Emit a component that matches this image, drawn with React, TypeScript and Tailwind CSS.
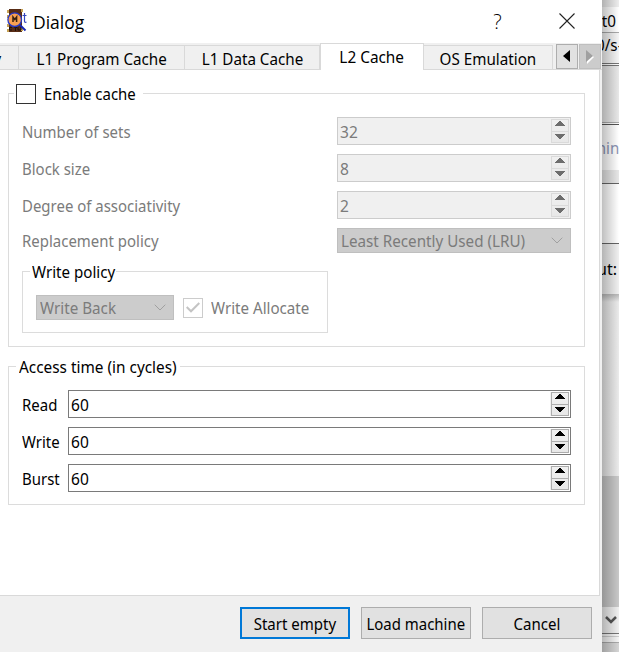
import React from "react";

function Caret({ up, color }: { up?: boolean; color: string }) {
  return (
    <svg width="10" height="5" viewBox="0 0 10 5" shapeRendering="crispEdges" className="block">
      <path d={up ? "M0 5V4H1V3H2V2H3V1H4V0H6V1H7V2H8V3H9V4H10V5Z" : "M0 0H10V1H9V2H8V3H7V4H6V5H4V4H3V3H2V2H1V1H0Z"} fill={color} />
    </svg>
  );
}

function Spin({ value, disabled }: { value: string; disabled?: boolean }) {
  const color = disabled ? "#6d6d6d" : "#000";
  const line = disabled ? "border-[#dadada]" : "border-[#adadad]";
  return (
    <div className={"flex h-7 flex-1 items-center justify-between border pl-[2px] pr-px " + (disabled ? "border-[#cccccc] bg-[#f0f0f0] text-[#7b7b7b]" : "border-[#7a7a7a] bg-white")}>
      <span className="origin-left scale-x-[.97] pt-[2px]">{value}</span>
      <div className="bg-[#f0f0f0] pl-px">
        <div className={"flex h-6 w-[18px] flex-col border bg-gradient-to-b from-[#f0f0f0] to-[#e8e8e8] " + line}>
          <div className={"flex h-[12px] items-start justify-center border-b pt-px " + line}><Caret up color={color} /></div>
          <div className="flex flex-1 items-start justify-center pt-[2px]"><Caret color={color} /></div>
        </div>
      </div>
    </div>
  );
}

function Combo({ value, className }: { value: string; className: string }) {
  return (
    <div className={"flex h-[25px] items-center justify-between border border-[#bfbfbf] bg-[#cccccc] pl-[3px] pr-[7px] text-[#7b7b7b] " + className}>
      <span className="origin-left scale-x-[.95] pt-px">{value}</span>
      <svg width="12" height="7" viewBox="0 0 12 7" fill="none" stroke="#a0a0a0"><path d="M.7.7L6 6L11.3.7" /></svg>
    </div>
  );
}

function MachineIcon() {
  return (
    <svg width="22" height="26" viewBox="0 0 22 26" className="mb-[3px] shrink-0">
      <path d="M3 2H16V25H3Z" fill="#582c15" />
      <path d="M1 3H3V6H1ZM1 8H3V11H1ZM1 17H3V20H1ZM1 22H3V25H1ZM15 2H17V5H15ZM15 21H17V24H15Z" fill="#c6a255" />
      <path d="M3.5 20.5H6M3.5 20V23H6M8 20.5H11M9.5 20.5V24M12 20V23H15V20" stroke="#1d120e" fill="none" />
      <circle cx="8.7" cy="12.7" r="6.8" fill="#f8a052" stroke="#2438c8" strokeWidth="1.3" />
      <path d="M7 15V10L8.8 12.5L10.6 10V15" stroke="#36200f" strokeWidth="1.5" fill="none" />
      <path d="M14 18L19.5 23.5" stroke="#1726b4" strokeWidth="2" />
      <path d="M18.5 6V14Q18.5 16 20.5 15M16.5 8.5H20.5" stroke="#3446bd" strokeWidth="1.2" fill="none" />
    </svg>
  );
}

const label = "origin-left scale-x-[.935] pt-[2px]";
const tab = "mt-[2px] flex h-[25px] shrink-0 items-center justify-center border-y border-r border-[#d9d9d9] bg-[#f0f0f0] pt-[3px]";
const button = "flex h-8 w-[110px] items-center justify-center bg-[#e1e1e1] pt-[2px]";

export default function App() {
  return (
    <div className="flex h-[652px] w-[619px] overflow-hidden bg-white font-['Noto_Sans','Open_Sans',sans-serif] text-[16px] leading-[20px] whitespace-nowrap text-black">
      <div className="flex w-[602px] shrink-0 flex-col bg-[#f0f0f0]">
        <header className="flex h-[43px] shrink-0 items-center bg-white pl-[6px]">
          <MachineIcon />
          <h1 className="ml-[5px] origin-left scale-x-[.92] font-['Open_Sans','Noto_Sans',sans-serif] text-[19px] leading-[26px]">Dialog</h1>
          <span className="mb-[2px] ml-auto scale-x-[.95] font-['Open_Sans','Noto_Sans',sans-serif] text-[21px] font-light">?</span>
          <svg className="mr-[27px] mb-[2px] ml-[57px]" width="16" height="16" viewBox="0 0 16 16" stroke="#222" strokeWidth="1.1"><path d="M.5.5L15.5 15.5M15.5.5L.5 15.5" /></svg>
        </header>

        <nav className="flex h-[27px] shrink-0">
          <div className={tab + " w-[19px] !justify-start overflow-hidden"}><span className="-ml-[7px]">y</span></div>
          <div className={tab + " w-[166px]"}><span className="scale-x-[.95]">L1 Program Cache</span></div>
          <div className={tab + " w-[135px]"}><span className="scale-x-[.95]">L1 Data Cache</span></div>
          <div className="flex h-[27px] w-[104px] items-center justify-center border-x border-t border-[#d9d9d9] bg-white"><span className="scale-x-[.96]">L2 Cache</span></div>
          <div className={tab + " w-[129px]"}><span className="scale-x-[.95]">OS Emulation</span></div>
          <div className="flex flex-1 items-start border-b border-[#d9d9d9] pt-px pl-[3px]">
            <div className="flex h-[25px] w-[22px] items-center justify-center border border-[#adadad] bg-[#e1e1e1] pr-px pb-[2px]">
              <svg width="7" height="12" viewBox="0 0 7 12"><path d="M7 0V12L0 6Z" /></svg>
            </div>
            <div className="ml-px flex h-[25px] w-[22px] items-center justify-center border border-[#bfbfbf] bg-[#cccccc]">
              <svg width="8" height="14" viewBox="0 0 8 14"><path d="M1 2V14L8 7Z" fill="white" /><path d="M0 0V12L7 6Z" fill="#a0a0a0" /></svg>
            </div>
          </div>
        </nav>

        <main className="mr-[2px] flex h-[526px] shrink-0 flex-col border-r border-b border-[#d9d9d9] bg-white pr-[14px] pl-2">
          <section className="mt-[23px] h-[254px] border border-[#dcdcdc] px-[13px]">
            <div className="-mt-[10px] -ml-[8px] flex h-5 w-[129px] items-center bg-white pl-[2px]">
              <span className="h-5 w-5 shrink-0 border border-[#333] bg-white" />
              <span className="ml-2 origin-left scale-x-[.935]">Enable cache</span>
            </div>
            <div className="mt-[13px] flex flex-col gap-[9px] text-[#7b7b7b]">
              <div className="flex items-center"><div className="w-[315px]"><div className={label}>Number of sets</div></div><Spin value="32" disabled /></div>
              <div className="flex items-center"><div className="w-[315px]"><div className={label}>Block size</div></div><Spin value="8" disabled /></div>
              <div className="flex items-center"><div className="w-[315px]"><div className={label}>Degree of associativity</div></div><Spin value="2" disabled /></div>
              <div className="flex items-center"><div className="w-[315px]"><div className="origin-left scale-x-[.935] pt-px">Replacement policy</div></div><Combo value="Least Recently Used (LRU)" className="flex-1" /></div>
            </div>
            <div className="mt-[18px] h-[62px] w-[306px] border border-[#dcdcdc]">
              <div className="-mt-[10px] ml-[7px] h-5 w-[86px] bg-white pl-[2px]"><div className="origin-left scale-x-[.945]">Write policy</div></div>
              <div className="mt-[13px] ml-[13px] flex items-center text-[#7b7b7b]">
                <Combo value="Write Back" className="w-[138px]" />
                <span className="ml-[9px] flex h-5 w-5 items-center justify-center border border-[#cccccc]">
                  <svg width="14" height="11" viewBox="0 0 14 11" fill="none" stroke="#c4c4c4" strokeWidth="2"><path d="M.7 5L5 9.3L13.3 1" /></svg>
                </span>
                <span className="ml-2 origin-left scale-x-[.945] pt-px">Write Allocate</span>
              </div>
            </div>
          </section>
          <section className="mt-[19px] h-[139px] border border-[#dcdcdc] px-[13px]">
            <div className="-mt-[10px] -ml-[6px] h-5 w-[164px] bg-white pl-[3px]"><div className="origin-left scale-x-[.96]">Access time (in cycles)</div></div>
            <div className="mt-[13px] flex flex-col gap-[9px]">
              <div className="flex items-center"><div className="w-[46px]"><div className={label}>Read</div></div><Spin value="60" /></div>
              <div className="flex items-center"><div className="w-[46px]"><div className={label}>Write</div></div><Spin value="60" /></div>
              <div className="flex items-center"><div className="w-[46px]"><div className={label}>Burst</div></div><Spin value="60" /></div>
            </div>
          </section>
        </main>

        <footer className="mt-[11px] flex pl-[240px]">
          <button className={button + " border-2 border-[#0078d7]"}><span className="scale-x-[.94]">Start empty</span></button>
          <button className={button + " ml-[11px] border border-[#adadad]"}><span className="scale-x-[.935]">Load machine</span></button>
          <button className={button + " ml-[11px] border border-[#adadad]"}><span className="scale-x-[.94]">Cancel</span></button>
        </footer>
      </div>

      <aside className="relative flex w-[17px] shrink-0 flex-col overflow-hidden">
        <div className="h-[7px] shrink-0 bg-[#ededed]" />
        <div className="flex h-[26px] shrink-0 items-center border-b border-[#aaa] bg-white pt-[2px]"><span className="-ml-[6px] origin-left scale-x-[.95]">/t0</span></div>
        <div className="flex h-[31px] shrink-0 items-center border-b border-[#777] bg-[#f5f5f5] pb-[7px]"><span className="-ml-[6px] origin-left scale-x-[.95]">0/s-</span></div>
        <div className="h-[2px] shrink-0 border-b border-[#777] bg-white" />
        <div className="h-[57px] shrink-0 border-b border-[#aaa] bg-[#e8e8e8]" />
        <div className="h-[2px] shrink-0 border-b border-[#555] bg-white" />
        <div className="flex h-[45px] shrink-0 items-center bg-white pt-px text-[#8b95b5]"><span className="-ml-[10px] origin-left scale-x-[.94]">min</span></div>
        <div className="h-[14px] shrink-0 border-b border-[#666] bg-[#e7e7e7]" />
        <div className="h-[60px] shrink-0 border-b border-[#666] bg-white" />
        <div className="flex h-[50px] shrink-0 items-center bg-[#f0f0f0]"><span className="-ml-[5px] pb-px">ut:</span></div>
        <div className="h-[182px] shrink-0 bg-gradient-to-b from-[#b8b8b8] via-[#ebebeb] via-[8px] to-[#ebebeb]" />
        <div className="h-[131px] shrink-0 bg-[#c8c8c8]" />
        <div className="flex h-[27px] shrink-0 items-center justify-center border-b border-[#777] bg-[#f0f0f0]">
          <svg width="12" height="10" viewBox="0 0 12 10" fill="none" stroke="#555" strokeWidth="2.5"><path d="M1 2L6 7L11 2" /></svg>
        </div>
        <div className="h-[3px] shrink-0 border-b border-[#ccc] bg-[#f5f5f5]" />
        <div className="h-[6px] shrink-0 border-b border-[#aaa] bg-[#f5f5f5]" />
        <div className="flex-1 bg-[#d5d5d5]" />
        <div className="absolute inset-0 bg-gradient-to-r from-black/25 to-transparent" />
      </aside>
    </div>
  );
}
